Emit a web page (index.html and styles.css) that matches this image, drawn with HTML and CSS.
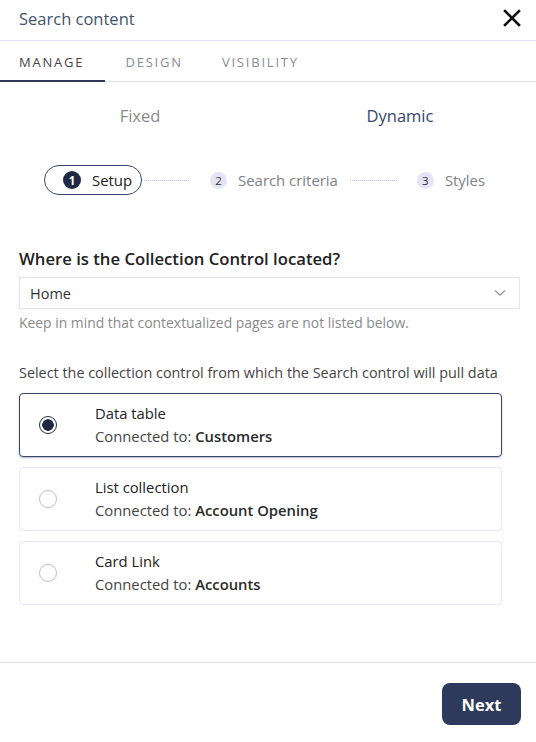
FILE: index.html
```html
<!DOCTYPE html>
<html>
<head>
<meta charset="utf-8">
<link rel="stylesheet" href="styles.css">
</head>
<body>
<div class="panel">
  <header class="header">
    <span class="title">Search content</span>
    <svg class="close" width="20" height="20" viewBox="0 0 20 20"><path d="M3 3 L17 17 M17 3 L3 17" stroke="#111" stroke-width="2.6" stroke-linecap="square"/></svg>
  </header>
  <nav class="tabs">
    <span class="tab active">MANAGE</span>
    <span class="tab">DESIGN</span>
    <span class="tab">VISIBILITY</span>
  </nav>
  <div class="modes">
    <span class="mode">Fixed</span>
    <span class="mode sel">Dynamic</span>
  </div>
  <div class="stepper">
    <div class="step current"><span class="num">1</span><span class="lbl">Setup</span></div>
    <span class="line first"></span>
    <div class="step"><span class="num">2</span><span class="lbl">Search criteria</span></div>
    <span class="line second"></span>
    <div class="step"><span class="num">3</span><span class="lbl">Styles</span></div>
  </div>
  <section class="content">
    <h2 class="q">Where is the Collection Control located?</h2>
    <div class="select">
      <span>Home</span>
      <svg width="12" height="8" viewBox="0 0 12 8"><path d="M1 1.5 L6 6 L11 1.5" fill="none" stroke="#9a9aa8" stroke-width="1.4"/></svg>
    </div>
    <p class="hint">Keep in mind that contextualized pages are not listed below.</p>
    <p class="lead">Select the collection control from which the Search control will pull data</p>
    <div class="cards">
      <div class="card checked">
        <span class="radio"></span>
        <div class="info"><div class="name">Data table</div><div class="conn">Connected to: <b>Customers</b></div></div>
      </div>
      <div class="card">
        <span class="radio"></span>
        <div class="info"><div class="name">List collection</div><div class="conn">Connected to: <b>Account Opening</b></div></div>
      </div>
      <div class="card">
        <span class="radio"></span>
        <div class="info"><div class="name">Card Link</div><div class="conn">Connected to: <b>Accounts</b></div></div>
      </div>
    </div>
  </section>
  <footer class="footer">
    <button class="next">Next</button>
  </footer>
</div>
</body>
</html>
```
FILE: styles.css
```css
* { box-sizing: border-box; }
html, body { margin: 0; padding: 0; background: #fff; }
body { font-family: "Open Sans", "Noto Sans", sans-serif; color: #333; }
.panel { width: 536px; height: 742px; display: flex; flex-direction: column; }
.header { height: 41px; display: flex; align-items: center; justify-content: space-between; padding: 0 14px 3px 19px; border-bottom: 1px solid #e2e2f4; }
.title { font-size: 16.5px; color: #44546a; }
.close { display: block; margin-top: -1px; }
.tabs { height: 41px; display: flex; border-bottom: 1px solid #e2e2f4; }
.tab { font-size: 13px; letter-spacing: 1.8px; color: #8a8a94; padding: 12px 0 0; margin-right: 39px; }
.tab:first-child { padding-left: 19px; padding-right: 21px; margin-right: 20px; }
.tab.active { color: #444; border-bottom: 2px solid #2e3a58; margin-bottom: -1px; }
.modes { display: flex; height: 67px; padding-top: 22px; }
.mode { text-align: center; font-size: 16.5px; color: #8a8a8a; flex: 0 0 280px; }
.mode.sel { color: #34476a; flex: 0 0 240px; }
.stepper { display: flex; align-items: center; padding-left: 44px; height: 30px; margin-top: 16px; }
.step { display: flex; align-items: center; height: 30px; font-size: 14.9px; color: #808088; }
.step .num { width: 17px; height: 17px; border-radius: 50%; background: #e4e4f6; color: #333; font-size: 11.5px; display: flex; align-items: center; justify-content: center; margin-right: 11px; }
.step.current { border: 1px solid #34476a; border-radius: 15px; padding: 0 9px 0 18px; color: #222; }
.step.current .num { width: 18px; height: 18px; background: #1f2b45; color: #fff; font-weight: 700; margin-right: 11px; }
.line { height: 0; border-top: 1px dotted #c0c0e2; }
.line.first { width: 47px; margin-right: 21px; }
.line.second { width: 47px; margin-left: 12px; margin-right: 20px; }
.content { padding: 0 19px; margin-top: 53px; flex: 1; }
.q { margin: 0; font-size: 16.7px; font-weight: 600; color: #222; line-height: 22px; }
.select { margin-top: 7px; margin-right: -3px; height: 32px; border: 1px solid #e2e2f4; display: flex; align-items: center; justify-content: space-between; padding: 0 13px 0 10px; font-size: 14.5px; color: #333; }
.hint { margin: 5px 0 0; font-size: 13.9px; color: #8a8a8a; line-height: 18px; }
.lead { margin: 32px 0 0; font-size: 14.4px; color: #444; line-height: 18px; white-space: nowrap; }
.cards { display: flex; flex-direction: column; gap: 10px; margin-top: 11px; width: 483px; }
.card { height: 64px; border: 1px solid #e6e6f4; border-radius: 4px; display: flex; align-items: center; padding-left: 19px; }
.card.checked { border-color: #34476a; box-shadow: 0 1px 2px rgba(40,50,90,0.35); }
.radio { width: 18px; height: 18px; border-radius: 50%; border: 1px solid #bdbdc4; margin-right: 38px; flex: none; }
.checked .radio { border: 1.5px solid #1f2b45; background: radial-gradient(circle, #1f2b45 0 5.5px, #fff 6px); }
.info { font-size: 14.8px; line-height: 23px; }
.name { color: #222; }
.conn { color: #444; }
.conn b { font-weight: 600; color: #2a2a2a; }
.footer { height: 80px; border-top: 1px solid #e2e2f4; display: flex; justify-content: flex-end; align-items: flex-start; padding: 20px 15px 0 0; }
.next { width: 79px; height: 42px; background: #2d3a5c; color: #fff; border: none; border-radius: 8px; font-family: "Open Sans", sans-serif; font-size: 16.5px; font-weight: 700; }
```
